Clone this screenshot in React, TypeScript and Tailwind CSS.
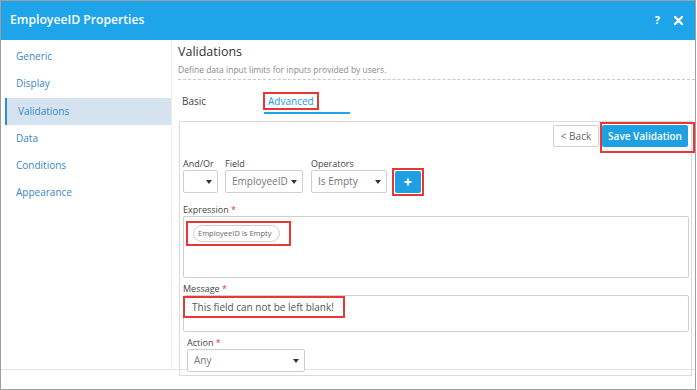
const NAV_ITEMS = ["Generic", "Display", "Validations", "Data", "Conditions", "Appearance"];

const FONT = "font-['Open_Sans','Liberation_Sans',sans-serif]";

function Caret() {
  return (
    <svg width="6" height="4" viewBox="0 0 6 4" className="shrink-0">
      <path d="M0 0 L6 0 L3 4 Z" fill="#333" />
    </svg>
  );
}

function Select({ value, className }: { value: string; className: string }) {
  return (
    <div
      className={`flex h-[23px] items-center justify-between rounded-[2px] border border-[#cfcfcf] bg-white pl-[6px] pr-[5px] text-[10px] text-[#777] ${className}`}
    >
      <span>{value}</span>
      <Caret />
    </div>
  );
}

function Label({ text, required }: { text: string; required?: boolean }) {
  return (
    <div className="h-[13px] text-[9px] leading-[13px] text-[#444]">
      {text}
      {required && <span className="text-[#e53935]"> *</span>}
    </div>
  );
}

export default function App() {
  return (
    <div className={`h-[390px] w-[696px] border border-[#9f9f9f] bg-white ${FONT}`}>
      {/* title bar */}
      <div className="flex h-[39px] items-center justify-between bg-[#1ea4e9] pl-[9px] pr-[12px] text-white">
        <span className="text-[12.2px] font-semibold">EmployeeID Properties</span>
        <div className="flex items-center gap-[14px]">
          <span className="text-[11px] font-bold">?</span>
          <svg width="9" height="9" viewBox="0 0 9 9">
            <path d="M1 1 L8 8 M8 1 L1 8" stroke="white" strokeWidth="2.4" strokeLinecap="round" />
          </svg>
        </div>
      </div>

      <div className="flex h-[330px] border-b border-[#e4e4e4]">
        {/* sidebar */}
        <div className="w-[171px] shrink-0 border-r border-[#ececec] pl-[4px] pt-[3px]">
          {NAV_ITEMS.map((item) =>
            item === "Validations" ? (
              <div
                key={item}
                className="my-[0.5px] flex h-[27px] items-center border-l-2 border-[#2f8de0] bg-[#d5e3f0] pl-[11px] text-[10px] text-[#3a86c8]"
              >
                {item}
              </div>
            ) : (
              <div key={item} className="flex h-[27px] items-center pl-[11px] text-[10px] text-[#3a86c8]">
                {item}
              </div>
            )
          )}
        </div>

        {/* main */}
        <div className="flex-1 pl-[6px]">
          <div className="mt-[3px] h-[18px] text-[12.5px] leading-[18px] text-[#333]">Validations</div>
          <div className="mt-[3px] border-b border-dashed border-[#c8c8c8] pb-[3px] text-[8.5px] leading-[12px] text-[#8a8a8a]">
            Define data input limits for inputs provided by users.
          </div>

          {/* tabs */}
          <div className="mt-[10px] flex">
            <div className="flex h-[24px] w-[86px] items-center pb-[2px] pl-[4px] text-[10px] text-[#444]">Basic</div>
            <div className="flex h-[24px] w-[86px] items-center border-b-2 border-[#1ea4e9]">
              <span className="ml-[-1px] flex h-[18px] items-center border-2 border-[#e53935] px-[3px] text-[10px] text-[#2196f3]">
                Advanced
              </span>
            </div>
          </div>

          {/* panel */}
          <div className="relative ml-[1px] mr-[3px] mt-[7px] h-[255px] border border-[#dadada] pl-[3px] pr-[2px]">
            <div className="flex items-start justify-end">
              <div className="mt-[3px] flex h-[22px] w-[46px] items-center justify-center rounded-[2px] border border-[#d0d0d0] bg-white text-[10px] text-[#666]">
                &lt; Back
              </div>
              <div className="ml-[1px] mr-[-6px] border-2 border-[#e53935] pb-[4px] pr-[5px] pt-[1px]">
                <div className="flex h-[22px] w-[86px] items-center justify-center rounded-[2px] bg-[#1ea0e2] text-[10px] font-semibold text-white">
                  Save Validation
                </div>
              </div>
            </div>

            {/* condition row */}
            <div className="mt-[4px] flex items-start">
              <div>
                <Label text="And/Or" />
                <Select value="" className="w-[35px]" />
              </div>
              <div className="ml-[7px]">
                <Label text="Field" />
                <Select value="EmployeeID" className="w-[78px]" />
              </div>
              <div className="ml-[8px]">
                <Label text="Operators" />
                <Select value="Is Empty" className="w-[76px]" />
              </div>
              <div className="ml-[5px] mt-[11px] border-2 border-[#e53935] p-[1px]">
                <div className="flex h-[22px] w-[26px] items-center justify-center rounded-[2px] bg-[#1ea0e2]">
                  <svg width="8" height="8" viewBox="0 0 8 8">
                    <path d="M4 0.5 V7.5 M0.5 4 H7.5" stroke="white" strokeWidth="2" />
                  </svg>
                </div>
              </div>
            </div>

            {/* expression */}
            <div className="mt-[7px]">
              <Label text="Expression" required />
              <div className="h-[62px] rounded-[2px] border border-[#cfcfcf] pl-[2px] pt-[1px]">
                <div className="inline-flex border-2 border-[#e53935] pb-[2px] pl-[5px] pr-[9px] pt-[2px]">
                  <div className="flex h-[17px] w-[87px] items-center rounded-full border border-[#cfcfcf] pl-[4px] text-[7.5px] text-[#666]">
                    EmployeeID Is Empty
                  </div>
                </div>
              </div>
            </div>

            {/* message */}
            <div className="mt-[4px]">
              <Label text="Message" required />
              <div className="h-[37px] rounded-[2px] border border-[#cfcfcf]">
                <div className="ml-[-1px] flex h-[22px] w-[162px] items-center border-2 border-[#e53935] pl-[7px] text-[10px] text-[#555]">
                  This field can not be left blank!
                </div>
              </div>
            </div>

            {/* action */}
            <div className="ml-[4px] mt-[4px]">
              <Label text="Action" required />
              <Select value="Any" className="w-[118px]" />
            </div>
          </div>
        </div>
      </div>
    </div>
  );
}
